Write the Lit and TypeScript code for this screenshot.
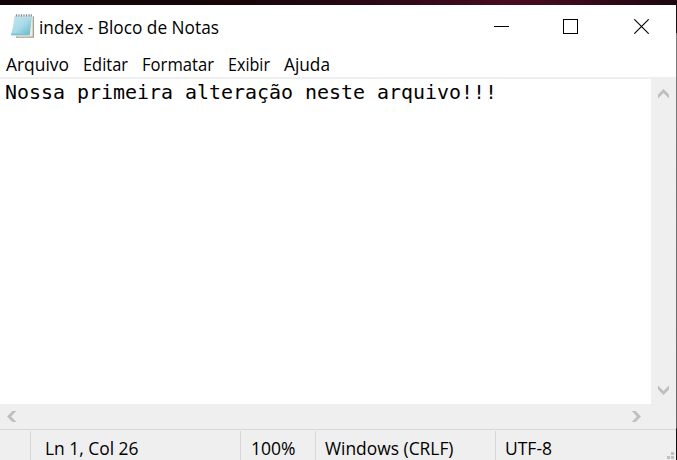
import { LitElement, html, css } from "lit";
import { customElement, property } from "lit/decorators.js";

/** A line of UI text fitted to a fixed advance width. */
@customElement("fitted-label")
export class FittedLabel extends LitElement {
  @property() text = "";
  @property({ type: Number }) width = 100;
  @property({ type: Boolean, reflect: true }) mono = false;

  static styles = css`
    :host { display: block; flex: none; height: 26px; }
    svg { display: block; overflow: visible; }
    text { font: 17.6px "Open Sans", "Noto Sans", sans-serif; fill: #000; white-space: pre; }
    :host([mono]) text { font: 19.4px "DejaVu Sans Mono", monospace; }
  `;

  render() {
    return html`<svg width=${this.width} height="26">
      <text x="0" y="19" textLength=${this.width} lengthAdjust="spacingAndGlyphs">${this.text}</text>
    </svg>`;
  }
}

@customElement("app-root")
export class AppRoot extends LitElement {
  static styles = css`
    :host { display: block; width: 677px; height: 460px; overflow: hidden; }
    * { box-sizing: border-box; }
    .desktop {
      width: 677px; height: 460px; padding: 5px 1px 0 0;
      background: linear-gradient(90deg, #120507 0, #180609 35%, #2a0815 55%, #480c22 76%, #3c0b1c 84%, #1c070d 100%) 0 0 / 677px 5px no-repeat,
        linear-gradient(#1c0a10 0 33px, #777 33px 130px, #666 428px, #111 429px) ;
    }
    .window { width: 676px; height: 455px; display: flex; flex-direction: column; background: #fff; }
    .title { height: 46px; display: flex; padding-top: 8px; }
    .icon { margin-left: 10px; width: 25px; height: 26px; flex: none; }
    .title fitted-label { margin: 2px 0 0 4px; }
    .controls { margin-left: auto; display: flex; }
    .controls svg { display: block; margin-top: 6px; width: 15px; height: 15px; }
    .min { margin-right: 54px; }
    .max { margin-right: 56px; }
    .close { margin-right: 27px; }
    .menu { height: 28px; display: flex; gap: 14px; padding: 1px 0 0 6px; border-bottom: 2px solid #efefef; }
    .body { height: 325px; display: flex; }
    .page { flex: 1; padding: 1px 0 0 5px; background: #fff; }
    .vbar { width: 25px; background: #efefef; display: flex; flex-direction: column; justify-content: space-between; padding: 10px 0 9px 6px; }
    .hbar { height: 25px; background: #efefef; display: flex; justify-content: space-between; padding: 7px 34px 0 7px; }
    .vbar svg, .hbar svg { display: block; fill: #bfbfbf; }
    .status { height: 31px; border-top: 1px solid #d7d7d7; background: #efefef; display: flex; padding-top: 1px; position: relative; }
    .cell { border-left: 1px solid #d7d7d7; padding-top: 5px; }
    .first { margin-left: 30px; width: 210px; padding-left: 14px; }
    .zoom { width: 75px; padding-left: 10px; }
    .eol { width: 180px; padding-left: 9px; }
    .enc { padding-left: 9px; }
    .grip { position: absolute; right: 2px; bottom: 1px; fill: #bfbfbf; }
  `;

  render() {
    return html`<div class="desktop"><div class="window">
      <div class="title">
        <svg class="icon" viewBox="0 0 25 26">
          <defs>
            <linearGradient id="sheet" x1="0" y1="0" x2="1" y2="1">
              <stop offset="0" stop-color="#c4e6ef"></stop>
              <stop offset=".5" stop-color="#a9dbe8"></stop>
              <stop offset="1" stop-color="#62b4ca"></stop>
            </linearGradient>
          </defs>
          <path d="M22.5 3.5H24V24.8H6V23.2H20.5z" fill="#a89d86"></path>
          <path d="M5 3H22.7V23.5H7z" fill="#efebdf"></path>
          <path d="M4.5 3H22L19.7 22.3H1Q3.3 14 4.5 3z" fill="url(#sheet)"></path>
          <path d="M1.3 20.5H19.9L19.7 22.3H1z" fill="#7fc1d2"></path>
          <path d="M5 3.5H22.5" stroke="#c9dde2" stroke-width="2"></path>
          <path d="M6.5 1.3V3.6M9 1.3V3.6M11.5 1.3V3.6M14 1.3V3.6M16.5 1.3V3.6M19 1.3V3.6M21.3 1.3V3.6" stroke="#7d8a8e" stroke-width="1.1"></path>
        </svg>
        <fitted-label text="index - Bloco de Notas" width="180"></fitted-label>
        <div class="controls">
          <svg class="min"><path d="M0 7.5H15" stroke="#000"></path></svg>
          <svg class="max"><rect x=".5" y=".5" width="14" height="14" fill="none" stroke="#000"></rect></svg>
          <svg class="close"><path d="M.3 .3 14.7 14.7M14.7 .3 .3 14.7" stroke="#000" stroke-width="1.1"></path></svg>
        </div>
      </div>
      <div class="menu">
        <fitted-label text="Arquivo" width="63"></fitted-label>
        <fitted-label text="Editar" width="45"></fitted-label>
        <fitted-label text="Formatar" width="72"></fitted-label>
        <fitted-label text="Exibir" width="42"></fitted-label>
        <fitted-label text="Ajuda" width="46"></fitted-label>
      </div>
      <div class="body">
        <div class="page"><fitted-label mono text="Nossa primeira alteração neste arquivo!!!" width="492"></fitted-label></div>
        <div class="vbar">
          <svg width="13" height="9"><path d="M6.5 0 12 5.5V9.4L6.5 4.1 1 9.4V5.5z"></path></svg>
          <svg width="13" height="10"><path d="M6.5 10 1 4.5V.6L6.5 5.9 12 .6V4.5z"></path></svg>
        </div>
      </div>
      <div class="hbar">
        <svg width="10" height="12"><path d="M0 5.5 5.5 0H9.3L4.1 5.5 9.3 11H5.5z"></path></svg>
        <svg width="10" height="12"><path d="M9 5.5 3.5 0H-.3L4.9 5.5 -.3 11H3.5z"></path></svg>
      </div>
      <div class="status">
        <div class="cell first"><fitted-label text="Ln 1, Col 26" width="93.5"></fitted-label></div>
        <div class="cell zoom"><fitted-label text="100%" width="44.5"></fitted-label></div>
        <div class="cell eol"><fitted-label text="Windows (CRLF)" width="128.5"></fitted-label></div>
        <div class="cell enc"><fitted-label text="UTF-8" width="47"></fitted-label></div>
        <svg class="grip" width="7" height="7"><path d="M4 0H7V3H4zM0 4H3V7H0zM4 4H7V7H4z"></path></svg>
      </div>
    </div></div>`;
  }
}
